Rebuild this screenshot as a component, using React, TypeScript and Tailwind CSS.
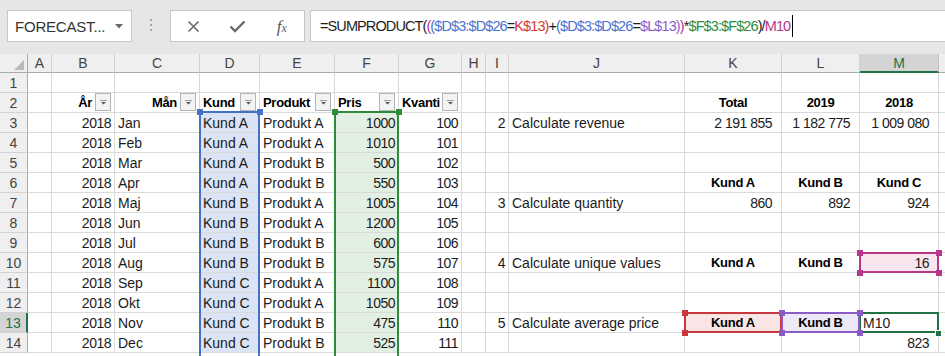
import React from 'react';

type Fill = 'blue' | 'green' | 'pink' | 'red' | 'purple';
type Cell = {
  v?: string;
  a?: 'l' | 'r' | 'c';
  b?: boolean;
  n?: boolean;
  f?: boolean;
  pr?: boolean;
  fill?: Fill;
};

const COLS = ['A', 'B', 'C', 'D', 'E', 'F', 'G', 'H', 'I', 'J', 'K', 'L', 'M', 'N'];

const FILL: Record<Fill, string> = {
  blue: 'bg-[#dae4f4]',
  green: 'bg-[#e2efe3]',
  pink: 'bg-[#f8e6ee]',
  red: 'bg-[#f9e5e5]',
  purple: 'bg-[#ece9f6]',
};

const ALIGN: Record<string, string> = {
  l: 'text-left',
  r: 'text-right',
  c: 'text-center',
};

function buildRows(): Record<string, Cell>[] {
  const rows: Record<string, Cell>[] = [];
  for (let i = 0; i < 14; i++) rows.push({});
  const months = ['Jan', 'Feb', 'Mar', 'Apr', 'Maj', 'Jun', 'Jul', 'Aug', 'Sep', 'Okt', 'Nov', 'Dec'];
  const kund = ['A', 'A', 'A', 'A', 'B', 'B', 'B', 'B', 'C', 'C', 'C', 'C'];
  const prod = ['A', 'A', 'B', 'B', 'A', 'A', 'B', 'B', 'A', 'A', 'B', 'B'];
  const pris = [1000, 1010, 500, 550, 1005, 1200, 600, 575, 1100, 1050, 475, 525];

  rows[1] = {
    B: { v: 'År', a: 'r', b: true, f: true },
    C: { v: 'Mån', a: 'r', b: true, f: true },
    D: { v: 'Kund', a: 'l', b: true, f: true },
    E: { v: 'Produkt', a: 'l', b: true, f: true },
    F: { v: 'Pris', a: 'l', b: true, f: true },
    G: { v: 'Kvanti', a: 'l', b: true, f: true },
    K: { v: 'Total', a: 'c', b: true },
    L: { v: '2019', a: 'c', b: true },
    M: { v: '2018', a: 'c', b: true },
  };

  for (let i = 0; i < 12; i++) {
    const r = rows[i + 2];
    r.B = { v: '2018', a: 'r', n: true };
    r.C = { v: months[i], a: 'l' };
    r.D = { v: 'Kund ' + kund[i], a: 'l', fill: 'blue' };
    r.E = { v: 'Produkt ' + prod[i], a: 'l' };
    r.F = { v: String(pris[i]), a: 'r', n: true, fill: 'green' };
    r.G = { v: String(100 + i), a: 'r', n: true };
  }

  Object.assign(rows[2], {
    I: { v: '2', a: 'r', n: true },
    J: { v: 'Calculate revenue', a: 'l' },
    K: { v: '2 191 855', a: 'r', n: true, pr: true },
    L: { v: '1 182 775', a: 'r', n: true, pr: true },
    M: { v: '1 009 080', a: 'r', n: true, pr: true },
  });
  Object.assign(rows[5], {
    K: { v: 'Kund A', a: 'c', b: true },
    L: { v: 'Kund B', a: 'c', b: true },
    M: { v: 'Kund C', a: 'c', b: true },
  });
  Object.assign(rows[6], {
    I: { v: '3', a: 'r', n: true },
    J: { v: 'Calculate quantity', a: 'l' },
    K: { v: '860', a: 'r', n: true, pr: true },
    L: { v: '892', a: 'r', n: true, pr: true },
    M: { v: '924', a: 'r', n: true, pr: true },
  });
  Object.assign(rows[9], {
    I: { v: '4', a: 'r', n: true },
    J: { v: 'Calculate unique values', a: 'l' },
    K: { v: 'Kund A', a: 'c', b: true },
    L: { v: 'Kund B', a: 'c', b: true },
    M: { v: '16', a: 'r', n: true, pr: true, fill: 'pink' },
  });
  Object.assign(rows[12], {
    I: { v: '5', a: 'r', n: true },
    J: { v: 'Calculate average price', a: 'l' },
    K: { v: 'Kund A', a: 'c', b: true, fill: 'red' },
    L: { v: 'Kund B', a: 'c', b: true, fill: 'purple' },
    M: { v: 'M10', a: 'l' },
  });
  Object.assign(rows[13], {
    M: { v: '823', a: 'r', n: true, pr: true },
  });
  return rows;
}

const ROWS = buildRows();

const FORMULA: [string, string][] = [
  ['=SUMPRODUCT(', '#1e1e1e'],
  ['(', '#b8378a'],
  ['(', '#4a72d0'],
  ['$D$3:$D$26', '#4a72d0'],
  ['=', '#1e1e1e'],
  ['K$13', '#d23a3a'],
  [')', '#d23a3a'],
  ['+', '#1e1e1e'],
  ['(', '#4a72d0'],
  ['$D$3:$D$26', '#4a72d0'],
  ['=', '#1e1e1e'],
  ['$L$13', '#8a5cc8'],
  [')', '#8a5cc8'],
  [')', '#b8378a'],
  ['*', '#1e1e1e'],
  ['$F$3:$F$26', '#2e8b3a'],
  [')/', '#1e1e1e'],
  ['M10', '#b8378a'],
];

function FilterBtn() {
  return (
    <div className="w-[16px] h-[18px] mr-[3px] shrink-0 self-start border border-[#b5b5b5] bg-[#f3f3f3] flex items-center justify-center">
      <svg width="7" height="5" viewBox="0 0 7 5">
        <rect x="0" y="0" width="7" height="1" fill="#9a9a9a" />
        <polygon points="1,2 6,2 3.5,4.5" fill="#555" />
      </svg>
    </div>
  );
}

function Handle({ cls }: { cls: string }) {
  return <div className={`absolute w-[6px] h-[6px] ${cls}`} />;
}

export default function App() {
  return (
    <div className="w-[945px] h-[356px] overflow-hidden bg-white font-['Liberation_Sans',Arial,sans-serif] text-[#1b1b1b]">
      {/* Formula bar */}
      <div className="h-[54px] bg-[#e6e6e6] flex items-start pt-[10px]">
        <div className="ml-[7px] w-[125px] h-[32px] bg-white border border-[#c6c6c6] flex items-center justify-between pl-[7px] pr-[8px] shrink-0">
          <span className="text-[15px] text-[#333] leading-none tracking-[-0.2px]">FORECAST...</span>
          <svg width="8" height="5" viewBox="0 0 8 5">
            <polygon points="0,0 8,0 4,4.5" fill="#6a6a6a" />
          </svg>
        </div>
        <div className="ml-[18px] mt-[9px] w-[2px] flex flex-col gap-[3px] shrink-0">
          <div className="w-[2px] h-[2px] bg-[#a8a8a8]" />
          <div className="w-[2px] h-[2px] bg-[#a8a8a8]" />
          <div className="w-[2px] h-[2px] bg-[#a8a8a8]" />
        </div>
        <div className="ml-[18px] w-[135px] h-[32px] bg-white border border-[#c6c6c6] flex items-center shrink-0">
          <div className="w-[45px] flex justify-center">
            <svg width="13" height="13" viewBox="0 0 13 13">
              <path d="M1.5 1.5 L11.5 11.5 M11.5 1.5 L1.5 11.5" stroke="#6a6a6a" strokeWidth="1.6" />
            </svg>
          </div>
          <div className="w-[45px] flex justify-center">
            <svg width="17" height="13" viewBox="0 0 17 13">
              <path d="M1.5 6.5 L6 11 L15.5 1.5" stroke="#6a6a6a" strokeWidth="2.4" fill="none" />
            </svg>
          </div>
          <div className="w-[45px] flex justify-center items-baseline font-['Liberation_Serif',serif] italic text-[#5a5a5a]">
            <span className="text-[17px] leading-none">f</span>
            <span className="text-[12px] leading-none">x</span>
          </div>
        </div>
        <div className="ml-[5px] flex-1 h-[32px] bg-white border border-r-0 border-[#c6c6c6] flex items-center pl-[9px]">
          <span className="text-[14.5px] leading-none tracking-[-0.9px] whitespace-nowrap">
            {FORMULA.map(([t, c], i) => (
              <span key={i} style={{ color: c }}>
                {t}
              </span>
            ))}
          </span>
          <div className="w-[1px] h-[22px] bg-black ml-[2px]" />
        </div>
      </div>

      {/* Sheet */}
      <div className="relative h-[302px] overflow-hidden">
        <div className="grid grid-cols-[28px_24px_63px_85px_60px_75px_64px_63px_24px_23px_176px_97px_78px_79px_60px] w-[999px]">
          {/* column header row */}
          <div className="h-[19px] bg-[#efefef] border-r border-b border-[#ababab] flex items-end justify-end pr-[3px] pb-[2px]">
            <svg width="10" height="10" viewBox="0 0 10 10">
              <polygon points="10,0 10,10 0,10" fill="#b9b9b9" />
            </svg>
          </div>
          {COLS.map((c) =>
            c === 'M' ? (
              <div
                key={c}
                className="h-[19px] bg-[#d4d4d4] border-r border-[#c4c4c4] border-b-2 border-b-[#217346] flex items-center justify-center text-[14px] text-[#217346] leading-[16px]"
              >
                {c}
              </div>
            ) : (
              <div
                key={c}
                className="h-[19px] bg-[#efefef] border-r border-[#d2d2d2] border-b border-b-[#ababab] flex items-center justify-center text-[14px] text-[#444] leading-[16px]"
              >
                {c === 'N' ? '' : c}
              </div>
            )
          )}

          {ROWS.map((row, ri) => (
            <React.Fragment key={ri}>
              {ri === 12 ? (
                <div className="h-[20px] bg-[#d4d4d4] border-r-2 border-r-[#217346] border-b border-b-[#d2d2d2] flex items-center justify-center text-[14px] text-[#217346] leading-[16px]">
                  {ri + 1}
                </div>
              ) : (
                <div className="h-[20px] bg-[#efefef] border-r border-r-[#ababab] border-b border-b-[#d2d2d2] flex items-center justify-center text-[14px] text-[#444] leading-[16px]">
                  {ri + 1}
                </div>
              )}
              {COLS.map((c) => {
                const cell = row[c];
                const fill = cell && cell.fill ? FILL[cell.fill] : '';
                return (
                  <div
                    key={c}
                    className={`h-[20px] border-r border-b border-[#dadada] flex items-center overflow-hidden ${fill}`}
                  >
                    {cell && cell.v ? (
                      <span
                        className={`flex-1 min-w-0 whitespace-nowrap overflow-hidden leading-[16px] pl-[3px] ${
                          cell.pr ? 'pr-[9px]' : 'pr-[3px]'
                        } ${ALIGN[cell.a || 'l']} ${
                          cell.b
                            ? 'font-bold text-[13px] tracking-[-0.3px] text-black'
                            : cell.n
                            ? 'text-[14px] tracking-[-0.5px]'
                            : 'text-[14px]'
                        }`}
                      >
                        {cell.v}
                      </span>
                    ) : null}
                    {cell && cell.f ? <FilterBtn /> : null}
                  </div>
                );
              })}
            </React.Fragment>
          ))}
        </div>

        {/* Range overlays */}
        <div className="absolute left-[199px] top-[57px] w-[61px] h-[400px] border-2 border-[#4472c4]" />
        <Handle cls="left-[197px] top-[55px] bg-[#4472c4]" />
        <Handle cls="left-[257px] top-[55px] bg-[#4472c4]" />

        <div className="absolute left-[334px] top-[57px] w-[65px] h-[400px] border-2 border-[#2e8b3a]" />
        <Handle cls="left-[332px] top-[55px] bg-[#2e8b3a]" />
        <Handle cls="left-[396px] top-[55px] bg-[#2e8b3a]" />

        <div className="absolute left-[859px] top-[198px] w-[80px] h-[21px] border-2 border-[#b8378a]" />
        <Handle cls="left-[857px] top-[196px] bg-[#b8378a]" />
        <Handle cls="left-[936px] top-[196px] bg-[#b8378a]" />
        <Handle cls="left-[857px] top-[216px] bg-[#b8378a]" />
        <Handle cls="left-[936px] top-[216px] bg-[#b8378a]" />

        <div className="absolute left-[684px] top-[258px] w-[98px] h-[21px] border-2 border-[#c9363c]" />
        <Handle cls="left-[682px] top-[256px] bg-[#c9363c]" />
        <Handle cls="left-[682px] top-[276px] bg-[#c9363c]" />

        <div className="absolute left-[859px] top-[258px] w-[80px] h-[21px] border-2 border-[#217346]" />
        <div className="absolute left-[935px] top-[276px] w-[7px] h-[7px] bg-[#217346] border border-white" />

        <div className="absolute left-[781px] top-[258px] w-[79px] h-[21px] border-2 border-[#8a5cc8]" />
        <Handle cls="left-[779px] top-[256px] bg-[#8a5cc8]" />
        <Handle cls="left-[779px] top-[276px] bg-[#8a5cc8]" />
        <Handle cls="left-[857px] top-[256px] bg-[#8a5cc8]" />
        <Handle cls="left-[857px] top-[276px] bg-[#8a5cc8]" />
      </div>
    </div>
  );
}
